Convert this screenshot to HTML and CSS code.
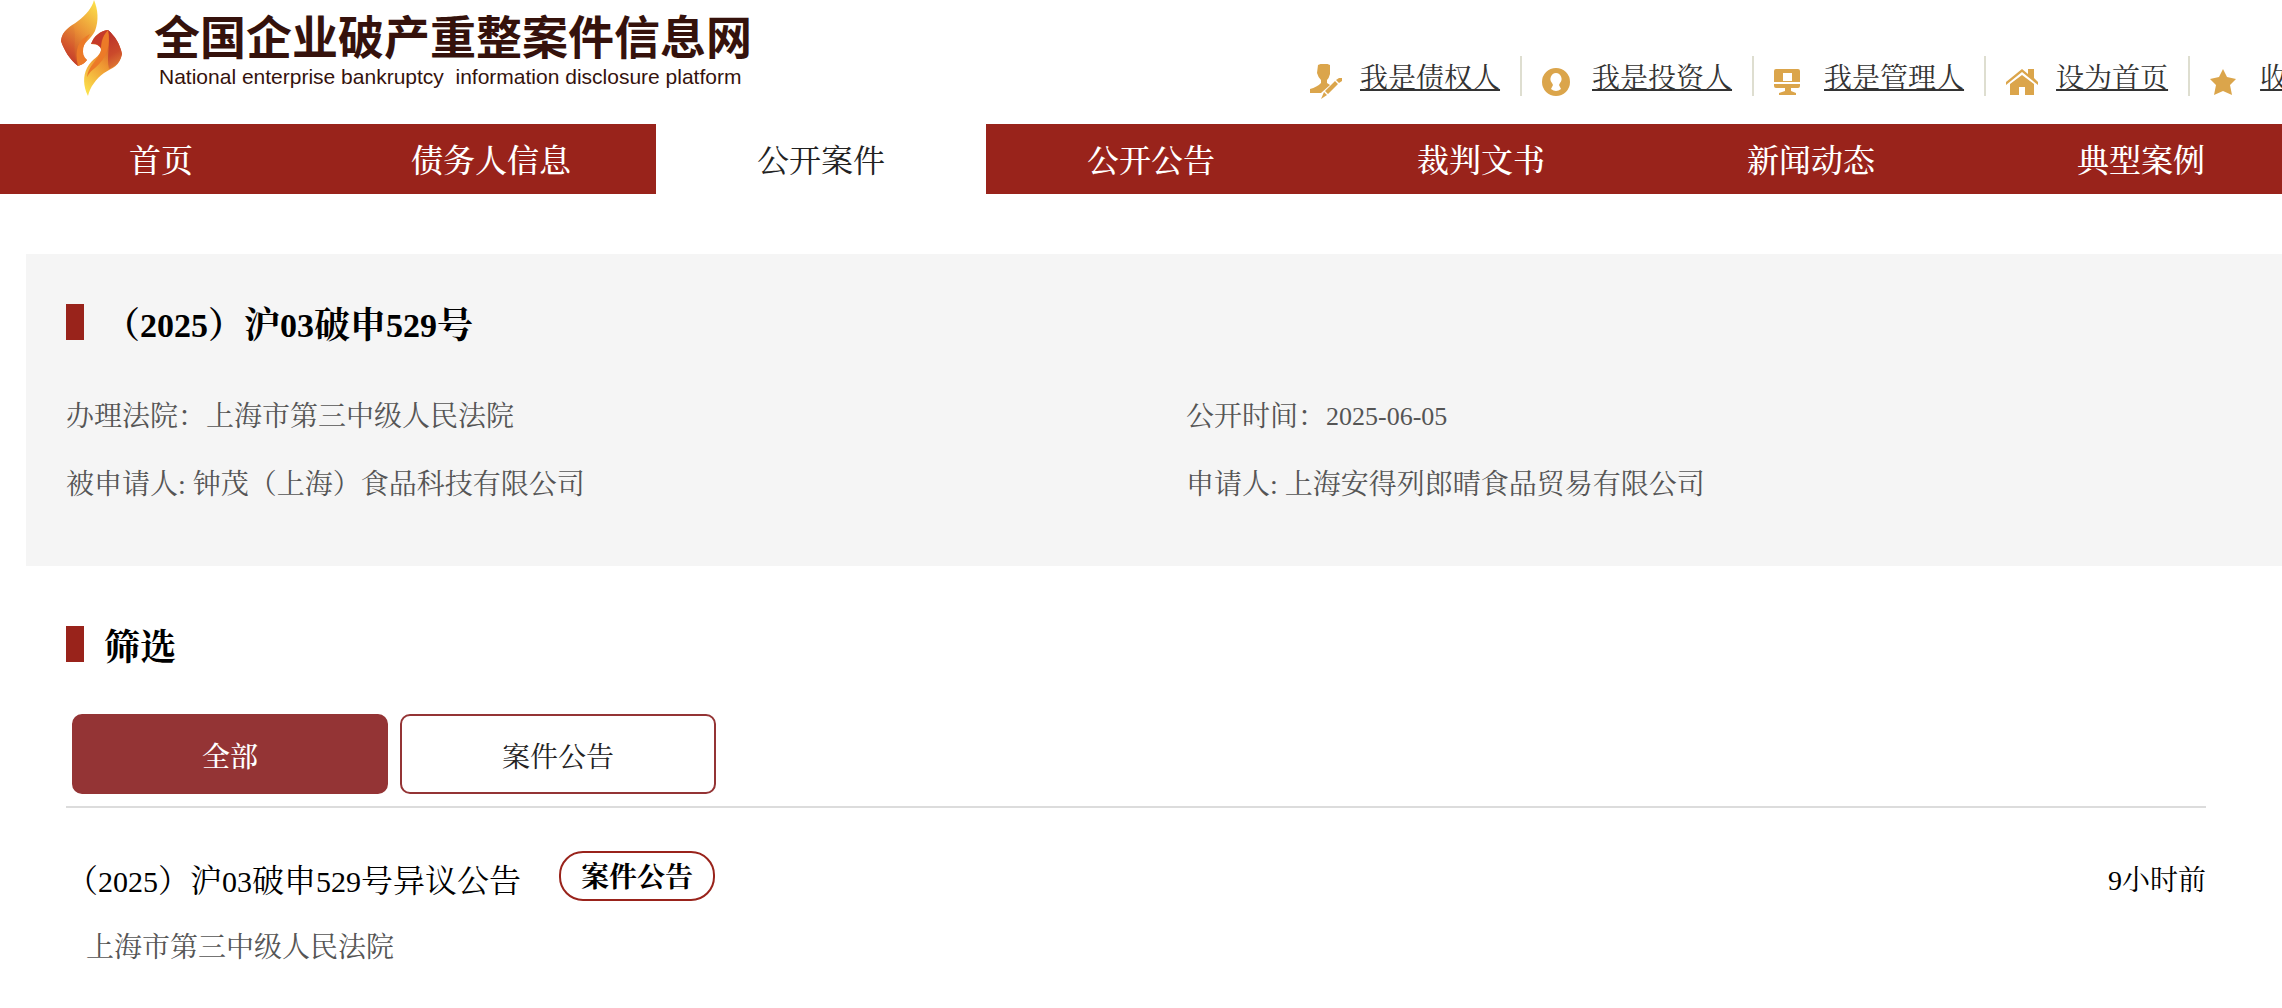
FILE: index.html
```html
<!DOCTYPE html>
<html lang="zh-CN">
<head>
<meta charset="utf-8">
<title>全国企业破产重整案件信息网</title>
<link rel="stylesheet" href="styles.css">
</head>
<body>
<header class="header">
  <div class="brand">
    <svg class="flame" viewBox="0 0 64 98" aria-hidden="true">
      <defs>
        <linearGradient id="up" x1="0.8" y1="0" x2="0.3" y2="1">
          <stop offset="0" stop-color="#fbdc4a"/><stop offset="0.5" stop-color="#ea9035"/><stop offset="1" stop-color="#c23d22"/>
        </linearGradient>
        <linearGradient id="down" x1="0.7" y1="0" x2="0.2" y2="1">
          <stop offset="0" stop-color="#c9401f"/><stop offset="0.5" stop-color="#ee9632"/><stop offset="1" stop-color="#fbe04c"/>
        </linearGradient>
        <linearGradient id="left" x1="0.6" y1="0" x2="0.3" y2="1">
          <stop offset="0" stop-color="#e58a35"/><stop offset="0.5" stop-color="#d4572c"/><stop offset="1" stop-color="#b9302a"/>
        </linearGradient>
        <linearGradient id="right" x1="0.3" y1="0" x2="0.5" y2="1">
          <stop offset="0" stop-color="#b9302a"/><stop offset="0.6" stop-color="#cb4a2b"/><stop offset="1" stop-color="#e07c34"/>
        </linearGradient>
      </defs>
      <path fill="url(#up)" d="M34 0C38 10 39 20 35 31C31 39 24 42 22 50C22 55 24 58 27 60C24 64 20 65 18 66C10 60 4 50 1 41C2 30 10 27 18 21C26 15 32 8 34 0Z"/>
      <path fill="url(#left)" d="M1 41C2 33 7 29 13 25C18 36 11 52 18 66C10 60 4 50 1 41Z"/>
      <path fill="#ec7a28" d="M30 34C18 40 14 50 18 66C22 65 25 63 27 60C20 54 23 44 30 34Z"/>
      <path fill="url(#down)" d="M48 30C55 36 60 44 62 54C60 66 52 68 44 73C36 79 30 87 28 96C23 86 23 76 27 68C32 58 40 57 41 50C41 47 38 44 31 44C34 36 40 31 48 30Z"/>
      <path fill="url(#right)" d="M48 30C55 36 60 44 62 54C60 62 56 66 49 69C46 56 51 44 48 30Z"/>
      <path fill="#ec7a28" d="M48 30C51 45 47 58 35 68C32 70 29 73 27 77C28 66 39 59 41 51C42 44 41 37 48 30Z"/>
      <path fill="#c53a2a" d="M31 44C34 36 40 31 48 30C43 35 41 41 41 48C38 44 35 43 31 44Z"/>
    </svg>
    <div class="brand-text">
      <div class="brand-name">全国企业破产重整案件信息网</div>
      <div class="brand-sub">National enterprise bankruptcy&nbsp; information disclosure platform</div>
    </div>
  </div>
  <ul class="links">
    <li>
      <svg class="icon" viewBox="0 0 32 36" aria-hidden="true"><path d="M8 1Q14-2 20 1V10Q19 14 17 16V19L20 21L11 29H0V25Q7 23 11 19V16Q8 13 7 9Z"/><path d="M25 17L15 27L18 30L28 20ZM26 16L29 14H32V17L29 19ZM14 28L11 35L17 31Z"/></svg>
      <a href="#">我是债权人</a>
    </li>
    <li>
      <svg class="icon" viewBox="0 0 32 36" aria-hidden="true"><path fill-rule="evenodd" d="M14 4A14 14 0 1 1 14 32A14 14 0 1 1 14 4ZM14 9A6 6 0 0 0 10 19L11 21L9 25Q14 29 19 25L17 21L18 19A6 6 0 0 0 14 9Z"/></svg>
      <a href="#">我是投资人</a>
    </li>
    <li>
      <svg class="icon" viewBox="0 0 32 36" aria-hidden="true"><path fill-rule="evenodd" d="M2 5H24Q26 5 26 7V18H0V7Q0 5 2 5ZM9 9V17H18V9Z"/><path d="M0 20H26V22Q26 24 24 24H17V27L22 29V31H5V29L11 27V24H2Q0 24 0 22Z"/></svg>
      <a href="#">我是管理人</a>
    </li>
    <li>
      <svg class="icon" viewBox="0 0 32 36" aria-hidden="true"><path d="M0 18L16 5L22 10V5H28V14L32 18V21L16 8L0 21Z"/><path d="M4 20L16 11L28 20V31H19V23H13V31H4Z"/></svg>
      <a href="#">设为首页</a>
    </li>
    <li>
      <svg class="icon" viewBox="0 0 32 36" aria-hidden="true"><path d="M13 5L17 13L26 15L20 21L22 31L13 27L4 31L6 21L0 15L9 13Z"/></svg>
      <a href="#">收</a>
    </li>
  </ul>
</header>

<nav class="nav">
  <a href="#">首页</a>
  <a href="#">债务人信息</a>
  <a href="#" class="active">公开案件</a>
  <a href="#">公开公告</a>
  <a href="#">裁判文书</a>
  <a href="#">新闻动态</a>
  <a href="#">典型案例</a>
</nav>

<main>
  <section class="panel">
    <h1 class="heading">（<span class="num">2025</span>）沪<span class="num">03</span>破申<span class="num">529</span>号</h1>
    <dl class="facts">
      <div><dt>办理法院：</dt><dd>上海市第三中级人民法院</dd></div>
      <div><dt>公开时间：</dt><dd class="date">2025-06-05</dd></div>
      <div><dt>被申请人:&nbsp;</dt><dd>钟茂（上海）食品科技有限公司</dd></div>
      <div><dt>申请人:&nbsp;</dt><dd>上海安得列郎晴食品贸易有限公司</dd></div>
    </dl>
  </section>

  <section class="filter">
    <h2 class="heading">筛选</h2>
    <div class="tabs">
      <button type="button" class="tab selected">全部</button>
      <button type="button" class="tab">案件公告</button>
    </div>
    <article class="notice">
      <div class="notice-main">
        <a href="#" class="notice-title">（<span class="num">2025</span>）沪<span class="num">03</span>破申<span class="num">529</span>号异议公告</a>
        <span class="badge">案件公告</span>
        <time class="ago">9小时前</time>
      </div>
      <p class="court">上海市第三中级人民法院</p>
    </article>
  </section>
</main>
</body>
</html>
```
FILE: styles.css
```css
* { box-sizing: border-box; }

body {
  margin: 0;
  background: #fff;
  color: #000;
  font-family: "Liberation Serif", "Noto Serif CJK SC", "Noto Sans CJK SC", serif;
  font-size: 28px;
  line-height: 40px;
  overflow-x: hidden;
}

h1, h2, p, dl, dd, ul { margin: 0; padding: 0; }

a { color: inherit; text-decoration: none; }

/* Header */
.header {
  display: flex;
  height: 124px;
  overflow: hidden;
}

.brand {
  display: flex;
  flex: none;
  gap: 30px;
  width: 1310px;
  padding-left: 60px;
}

.flame { width: 64px; height: 98px; }

.brand-text { color: #35120c; white-space: nowrap; }

.brand-name {
  padding-top: 4px;
  font-family: "Noto Sans CJK SC", sans-serif;
  font-size: 46px;
  font-weight: 700;
  line-height: 60px;
}

.brand-sub {
  padding-left: 5px;
  font-family: "Liberation Sans", sans-serif;
  font-size: 21px;
  line-height: 26px;
}

.links {
  display: flex;
  flex: none;
  padding-top: 56px;
  list-style: none;
  color: #333;
}

.links li {
  display: flex;
  height: 40px;
  padding-right: 20px;
  margin-right: 20px;
  border-right: 2px solid #deded0;
}

.links a {
  padding-top: 3px;
  text-decoration: underline;
  text-decoration-thickness: 2px;
  text-underline-offset: 1px;
  white-space: nowrap;
}

.icon {
  width: 32px;
  height: 36px;
  margin: 8px 18px 0 0;
  fill: #dba54b;
}

/* Navigation */
.nav {
  display: grid;
  grid-template-columns: repeat(7, 330px);
  height: 70px;
  margin-left: -4px;
  overflow: hidden;
  background: #99231b;
  color: #fff;
  font-size: 32px;
  font-weight: 500;
  line-height: 74px;
  text-align: center;
}

.nav .active { background: #fff; color: #222; font-weight: 400; }

/* Section headings */
.heading {
  display: flex;
  align-items: flex-start;
  font-size: 36px;
  font-weight: 700;
  line-height: 44px;
}

.heading::before {
  content: "";
  width: 18px;
  height: 36px;
  margin-right: 20px;
  background: #99231b;
}

.heading .num { font-size: 34px; }

/* Case summary */
.panel {
  min-height: 312px;
  margin: 60px 0 0 26px;
  padding: 50px 0 40px 40px;
  background: #f5f5f5;
}

.facts {
  display: grid;
  grid-template-columns: 1fr 1fr;
  gap: 28px 24px;
  padding-top: 49px;
  color: #555;
}

.facts div { display: flex; }

.date { font-size: 26px; }

/* Filter and notices */
.filter { padding: 60px 76px 0 66px; }

.tabs {
  display: flex;
  gap: 12px;
  padding: 44px 6px 12px;
  border-bottom: 2px solid #dcdcdc;
}

.tab {
  width: 316px;
  height: 80px;
  padding: 8px 0 0;
  border: 2px solid #943435;
  border-radius: 10px;
  background: #fff;
  color: #222;
  font: inherit;
}

.tab.selected { background: #943435; color: #fff; font-weight: 500; }

.notice-main {
  display: flex;
  align-items: center;
  padding-top: 41px;
}

.notice-title { padding-top: 12px; font-size: 32px; }

.notice-title .num { font-size: 30px; }

.badge {
  width: 156px;
  height: 50px;
  margin-left: 38px;
  border: 2px solid #99231b;
  border-radius: 24px;
  font-weight: 700;
  line-height: 50px;
  text-align: center;
}

.ago { padding-top: 10px; margin-left: auto; }

.court { padding: 26px 20px; color: #555; }
```
